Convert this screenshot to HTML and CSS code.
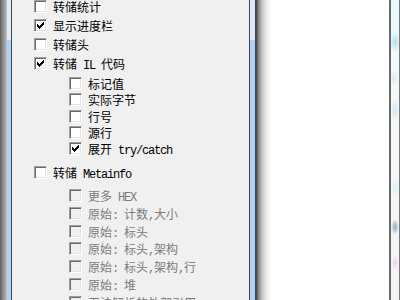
FILE: index.html
```html
<!DOCTYPE html>
<html>
<head>
    <meta charset="UTF-8">
    <title>选项</title>
    <link rel="stylesheet" href="styles.css">
</head>
<body>
<div class="screen">
    <div class="edge-left"></div>
    <div class="glass glass-left"></div>

    <div class="panel">
        <div class="group">
            <label class="row"><span class="box"></span><span class="label">转储统计</span></label>
            <label class="row"><span class="box"><svg class="tick" viewBox="0 0 7 7" width="7" height="7"><path d="M0 2h1v3H0zM1 3h1v3H1zM2 4h1v3H2zM3 3h1v3H3zM4 2h1v3H4zM5 1h1v3H5zM6 0h1v3H6z"/></svg></span><span class="label">显示进度栏</span></label>
            <label class="row"><span class="box"></span><span class="label">转储头</span></label>
            <label class="row"><span class="box"><svg class="tick" viewBox="0 0 7 7" width="7" height="7"><path d="M0 2h1v3H0zM1 3h1v3H1zM2 4h1v3H2zM3 3h1v3H3zM4 2h1v3H4zM5 1h1v3H5zM6 0h1v3H6z"/></svg></span><span class="label">转储<span class="en"> IL </span>代码</span></label>
        </div>

        <div class="sub sub-il">
            <label class="row"><span class="box"></span><span class="label">标记值</span></label>
            <label class="row"><span class="box"></span><span class="label">实际字节</span></label>
            <label class="row"><span class="box"></span><span class="label">行号</span></label>
            <label class="row"><span class="box"></span><span class="label">源行</span></label>
            <label class="row"><span class="box"><svg class="tick" viewBox="0 0 7 7" width="7" height="7"><path d="M0 2h1v3H0zM1 3h1v3H1zM2 4h1v3H2zM3 3h1v3H3zM4 2h1v3H4zM5 1h1v3H5zM6 0h1v3H6z"/></svg></span><span class="label">展开<span class="en"> try/catch</span></span></label>
        </div>

        <label class="row meta"><span class="box"></span><span class="label">转储<span class="en"> Metainfo</span></span></label>

        <div class="sub sub-meta">
            <label class="row off"><span class="box"></span><span class="label">更多<span class="en"> HEX</span></span></label>
            <label class="row off"><span class="box"></span><span class="label">原始<span class="en">: </span>计数<span class="en">,</span>大小</span></label>
            <label class="row off"><span class="box"></span><span class="label">原始<span class="en">: </span>标头</span></label>
            <label class="row off"><span class="box"></span><span class="label">原始<span class="en">: </span>标头<span class="en">,</span>架构</span></label>
            <label class="row off"><span class="box"></span><span class="label">原始<span class="en">: </span>标头<span class="en">,</span>架构<span class="en">,</span>行</span></label>
            <label class="row off"><span class="box"></span><span class="label">原始<span class="en">: </span>堆</span></label>
            <label class="row off"><span class="box"></span><span class="label">无法解析的外部引用</span></label>
        </div>
    </div>

    <div class="glass glass-right"></div>
    <div class="backdrop"></div>
    <div class="frame-right">
        <div class="frame-line"></div>
        <div class="frame-glass"></div>
        <div class="frame-edge"></div>
    </div>
</div>
</body>
</html>
```

FILE: styles.css
```css
html, body {
    margin: 0;
    padding: 0;
    overflow: hidden;
}

.screen {
    display: flex;
    width: 400px;
    height: 300px;
    overflow: hidden;
}

/* window chrome bits on the left */
.edge-left {
    width: 7px;
    background: linear-gradient(to right, #5c5c5c, #8e8e8e 45%, #a9a9a9 80%, #cdcdcd);
}

.glass {
    background: linear-gradient(to bottom, #dfeaf6 0, #dfeaf6 40px, #b2d0ef 40px, #b2d0ef);
}

.glass-left {
    width: 4px;
    border-right: 1px solid #3e4853;
}

.glass-right {
    width: 5px;
    border-left: 1px solid #3e4853;
    border-right: 1px solid #3e4853;
}

.panel {
    width: 237px;
    background-color: #f0f0f0;
    padding-left: 22px;
    box-sizing: border-box;
    font-family: "Noto Sans CJK SC", sans-serif;
    font-size: 12px;
    color: #000;
}

.group {
    display: flex;
    flex-direction: column;
    gap: 6px;
}

.row {
    display: flex;
    align-items: center;
    height: 13px;
    white-space: nowrap;
}

.label {
    display: block;
    height: 12px;
    line-height: 12px;
    padding-top: 1px;
}

.box {
    width: 13px;
    height: 13px;
    box-sizing: border-box;
    margin-right: 6px;
    flex: none;
    display: flex;
    align-items: center;
    justify-content: center;
    background-color: #fff;
    border: 1px solid;
    border-color: #a0a0a0 #ffffff #ffffff #a0a0a0;
    box-shadow: inset 1px 1px 0 #696969, inset -1px -1px 0 #e3e3e3;
}

.tick {
    display: block;
    fill: #000;
    shape-rendering: crispEdges;
}

.en {
    font-family: "Liberation Mono", monospace;
    font-size: 12px;
    letter-spacing: -1.2px;
    white-space: pre;
}

.sub {
    display: flex;
    flex-direction: column;
    padding-left: 35px;
}

.sub-il {
    margin-top: 7px;
    gap: 3.25px;
}

.meta {
    margin-top: 11px;
}

.sub-meta {
    margin-top: 10px;
    gap: 4.8px;
}

.off {
    color: #7b7b7b;
}

.off .box {
    background-color: #f0f0f0;
}

/* the window behind the dialog */
.backdrop {
    width: 133px;
    background: linear-gradient(to right, #3c3c3c, #7d7d7d 12%, #c4c4c4 35%, #eeeeee 65%, #ffffff 95%);
    background-size: 17px 100%;
    background-repeat: no-repeat;
    background-color: #fff;
}

.frame-right {
    display: flex;
    width: 11px;
}

.frame-line {
    width: 2px;
    background-color: #6a6a6a;
}

.frame-glass {
    width: 8px;
    background:
        radial-gradient(ellipse 5px 10px at 50% 42px, #b7d9f2, transparent),
        radial-gradient(ellipse 4px 9px at 40% 78px, #d6ebf8, transparent),
        radial-gradient(ellipse 4px 12px at 50% 110px, #cfe6f6, transparent),
        radial-gradient(ellipse 4px 10px at 50% 188px, #d7f3fa, transparent),
        radial-gradient(ellipse 4px 8px at 50% 227px, #8ea9c2, transparent),
        radial-gradient(ellipse 3px 7px at 50% 263px, #f0c8ee, transparent),
        linear-gradient(to bottom, #e6fafb, #f6f8f8 30%, #f3f3f3);
}

.frame-edge {
    width: 1px;
    background-color: #7a7a7a;
}
```
